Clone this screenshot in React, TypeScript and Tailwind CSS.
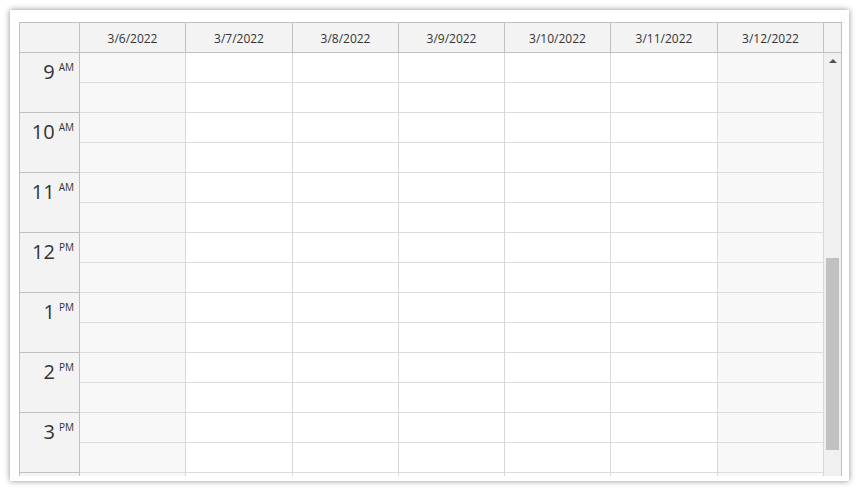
import React from "react";

const days = ["3/6/2022", "3/7/2022", "3/8/2022", "3/9/2022", "3/10/2022", "3/11/2022", "3/12/2022"];
const widths = ["w-[106px]", "w-[107px]", "w-[106px]", "w-[106px]", "w-[106px]", "w-[107px]", "w-[106px]"];
const hours: [string, string][] = [
  ["9", "AM"],
  ["10", "AM"],
  ["11", "AM"],
  ["12", "PM"],
  ["1", "PM"],
  ["2", "PM"],
  ["3", "PM"],
  ["", ""],
];

export default function App() {
  const font = { fontFamily: '"Open Sans", "Noto Sans", sans-serif' };
  return (
    <div className="w-[860px] h-[491px] bg-white pl-[10px] pt-[10px]" style={font}>
      <div className="w-[839px] h-[471px] bg-white shadow-[0_0_6px_rgba(0,0,0,0.45)] pl-[9px] pt-[12px]">
        <div className="w-[823px] border-l border-t border-r border-[#c0c0c0] flex flex-col">
          {/* header */}
          <div className="flex h-[30px] border-b border-[#c0c0c0] bg-[#f3f3f3] text-[12px] text-[#333]">
            <div className="w-[60px] border-r border-[#c0c0c0]" />
            {days.map((d, i) => (
              <div key={d} className={`${widths[i]} border-r border-[#c0c0c0] flex items-center justify-center pt-[3px]`}>
                {d}
              </div>
            ))}
            <div className="flex-1" />
          </div>
          {/* body */}
          <div className="flex h-[423px] overflow-hidden">
            <div className="w-[60px] shrink-0 border-r border-[#c0c0c0] bg-[#f3f3f3]">
              {hours.map(([h, ap], idx) => (
                <div key={idx} className="h-[60px] border-b border-[#c0c0c0] flex justify-end pr-[5px] pt-[7px] text-[#333]">
                  {h && <span className="text-[20px] leading-[24px]">{h}</span>}
                  {ap && <span className="text-[10px] leading-[12px] ml-[4px] mt-[1px]">{ap}</span>}
                </div>
              ))}
            </div>
            {days.map((d, i) => (
              <div
                key={d}
                className={`${widths[i]} shrink-0 border-r border-[#d8d8d8] ${i === 0 || i === 6 ? "bg-[#f8f8f8]" : "bg-white"}`}
              >
                {Array.from({ length: 16 }).map((_, k) => (
                  <div key={k} className="h-[30px] border-b border-[#dddddd]" />
                ))}
              </div>
            ))}
            <div className="w-[17px] shrink-0 bg-[#f0f0f0] relative">
              <div className="absolute left-[5px] top-[6px] w-0 h-0 border-l-[4px] border-r-[4px] border-b-[4px] border-l-transparent border-r-transparent border-b-[#505050]" />
              <div className="absolute left-[2px] top-[205px] w-[13px] h-[192px] bg-[#c1c1c1]" />
            </div>
          </div>
        </div>
      </div>
    </div>
  );
}
